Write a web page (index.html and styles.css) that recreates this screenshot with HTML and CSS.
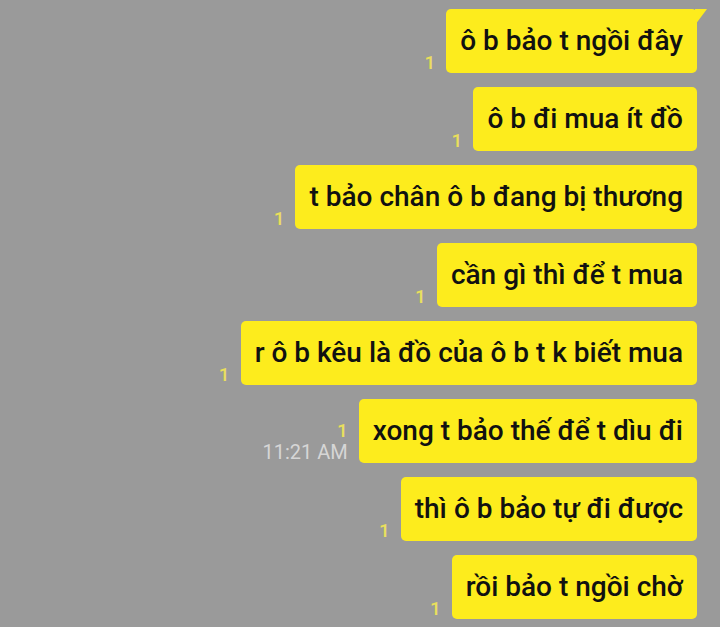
FILE: index.html
```html
<!DOCTYPE html>
<html lang="vi">
<head>
  <meta charset="UTF-8">
  <meta name="viewport" content="width=device-width, initial-scale=1.0">
  <title>Chat</title>
  <link rel="stylesheet" href="styles.css">
</head>
<body>
  <div class="chat">
      <div class="row">
          <div class="meta"><span class="unread">1</span></div>
          <div class="bubble first">ô b bảo t ngồi đây</div>
      </div>
      <div class="row">
          <div class="meta"><span class="unread">1</span></div>
          <div class="bubble">ô b đi mua ít đồ</div>
      </div>
      <div class="row">
          <div class="meta"><span class="unread">1</span></div>
          <div class="bubble">t bảo chân ô b đang bị thương</div>
      </div>
      <div class="row">
          <div class="meta"><span class="unread">1</span></div>
          <div class="bubble">cần gì thì để t mua</div>
      </div>
      <div class="row">
          <div class="meta"><span class="unread">1</span></div>
          <div class="bubble">r ô b kêu là đồ của ô b t k biết mua</div>
      </div>
      <div class="row">
          <div class="meta">
              <span class="unread">1</span>
              <span class="time">11:21 AM</span>
          </div>
          <div class="bubble">xong t bảo thế để t dìu đi</div>
      </div>
      <div class="row">
          <div class="meta"><span class="unread">1</span></div>
          <div class="bubble">thì ô b bảo tự đi được</div>
      </div>
      <div class="row">
          <div class="meta"><span class="unread">1</span></div>
          <div class="bubble">rồi bảo t ngồi chờ</div>
      </div>
  </div>
</body>
</html>
```

FILE: styles.css
```css
body {
    margin: 0;
    padding: 0;
    background: #9a9a9a;
    font-family: Roboto, 'Noto Sans', sans-serif;
    overflow: hidden;
}

.chat {
    display: flex;
    flex-direction: column;
    gap: 14px;
    padding: 9px 23px 0 0;
}

.row {
    display: flex;
    justify-content: flex-end;
    align-items: flex-end;
    gap: 11px;
}

.meta {
    display: flex;
    flex-direction: column;
    align-items: flex-end;
}

.unread {
    color: #e9df5c;
    font-size: 19px;
    font-weight: 500;
    line-height: 20px;
}

.time {
    color: #d6d6d6;
    font-size: 20px;
    line-height: 22px;
}

.bubble {
    background: #fdec1d;
    color: #111;
    font-size: 28px;
    font-weight: 500;
    line-height: 64px;
    height: 64px;
    padding: 0 14px;
    border-radius: 5px;
    white-space: nowrap;
    position: relative;
}

/* tail on the first message of the group */
.bubble.first::after {
    content: '';
    position: absolute;
    top: 0;
    right: -10px;
    border-top: 16px solid #fdec1d;
    border-right: 12px solid transparent;
}
```
